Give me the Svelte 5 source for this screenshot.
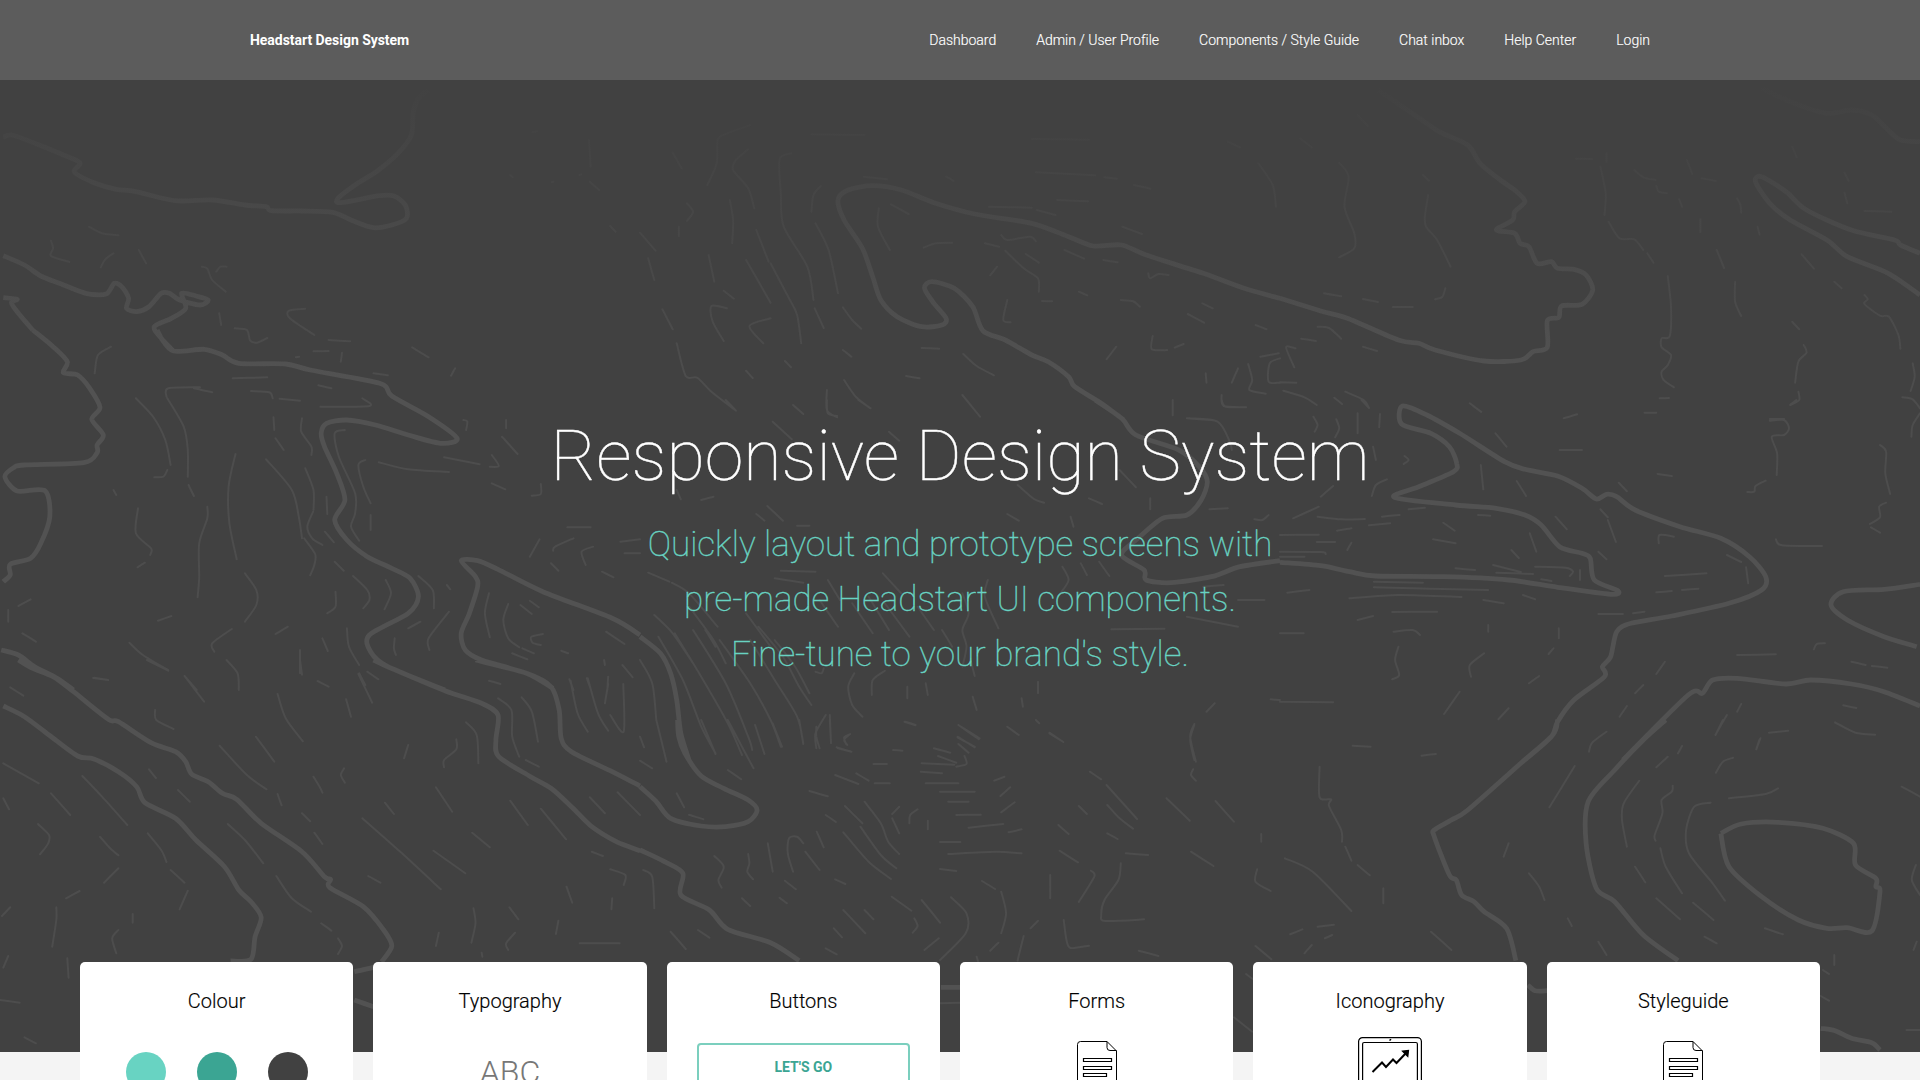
<script>
  const nav = ['Dashboard', 'Admin / User Profile', 'Components / Style Guide', 'Chat inbox', 'Help Center', 'Login'];
  const cards = ['Colour', 'Typography', 'Buttons', 'Forms', 'Iconography', 'Styleguide'];

  // The contour map is split in nine sheets, each with its own 2.45 x 3 grid.
  // Contours are point lists separated by "|"; "major" are the thick index lines.
  const sheets = [
    {
      x: 0, y: 0,
      major: `8,412 30,405 90,432 150,462 196,488 182,516 230,548 285,568 330,574 430,602 520,600 600,615 652,620 665,632 740,633 815,637 860,660 915,683 960,675 996,655 993,615 965,588 930,587 835,608 828,595 870,555 925,512 975,460 1008,405 1012,340 1025,295 1050,270|8,767 60,795 100,828 150,852 210,880 260,882 280,850 300,862 315,895 310,925 335,935 365,920 395,880 415,880 440,900 490,915 510,900 480,888 445,880 455,925 420,955 378,980 395,1015 425,1053|8,893 42,898 28,908 45,940 80,990`,
      minor: `218,680 250,700 290,706|125,722 130,745 125,768 170,786|278,760 258,778 247,802|340,750 358,790|495,800 508,806 520,840 553,875|530,815 540,800 555,800|537,940 542,975|575,985 605,990 613,1022 630,1028 655,1014|748,926 708,932 710,955 770,1005|805,1020 858,1024|1010,1042 1050,1072|1443,420 1447,500|1445,545 1468,570|1495,678 1508,695|1305,396 1316,394|1352,547 1356,545|1250,525 1256,532|1420,525 1424,523|725,1072 733,1070|768,1054 805,1053|838,1058 835,1085`
    },
    {
      x: 640, y: 60,
      major: `1568,715 1480,685 1380,640 1240,585 1180,555 1110,558 1050,530 960,490 820,462 720,428 640,390 570,377 510,390 485,420 500,480 545,565 570,650 590,720 630,770 690,800 740,795 750,775 720,730 697,685 715,665 770,685 815,740 840,812 895,840 960,885 1000,905 1050,950 1065,980 1130,1030 1185,1080`,
      minor: `270,195 210,222 190,240 188,310 165,375|265,268 235,300 228,330 265,385 280,445|370,280 342,298 345,400 352,500 410,620 425,720|443,378 425,405 420,455|220,420 228,480 226,550|430,490 462,570 485,700|285,510 315,605|320,610 365,715 385,765 395,850|260,600 320,728|168,585 182,665|20,595 35,660|0,518 38,572|115,430 130,455 115,483|95,500 95,528|205,692 230,716|213,745 175,738 178,785 205,843|55,748 80,808|90,850 112,948 140,953 175,995 233,1050|320,775 268,798 302,850|428,745 450,804|497,742 520,780 542,806|585,445 583,500 612,570|548,350 605,358|615,433 658,462|695,563 725,550 765,548|458,990 458,1050 483,1072|500,960 530,1012 565,1045|378,1038 400,1062|260,932 276,954|355,903 370,922|497,870 518,890|690,864 733,866|652,948 685,955|792,882 825,918 867,946|790,1005 833,1070|875,620 858,646|900,720 890,780 908,787|985,723 1010,724|895,572 940,625 975,655 977,695|945,582 977,608|845,550 880,560|885,525 900,540 955,530 970,544|1040,570 1088,596|1135,600 1170,607|1245,640 1250,655 1270,642 1295,645|1075,695 1096,706|1178,720 1208,724 1225,740|1378,730 1403,745|1342,762 1382,788|1508,795 1535,808|1182,500 1230,522|855,440 960,443|972,450 1018,465|1022,420 1098,424|970,337 1115,346|1138,352 1168,356|1210,375 1250,386|960,237 1100,239|420,223 550,225|1256,828 1254,868 1292,870|1310,863 1332,852|1167,860 1143,898|1305,1022 1305,1066|1425,1005 1430,1038 1485,1042|1490,912 1500,960 1493,990 1533,1001|1386,940 1388,968|1465,925 1450,968|1568,895 1543,910 1540,965 1568,968|1520,890 1565,880|1340,1075 1400,1080|1515,310 1550,375 1558,440|1440,245 1470,262|750,350 768,362|80,278 102,325`
    },
    {
      x: 1280, y: 60,
      major: `0,715 100,753 165,775 290,840 340,850 380,870 500,903 590,900 620,875 655,862 655,782 683,772 690,738 740,733 766,690 750,645 720,628 680,625 665,605 630,610 610,560 588,550 575,520 530,510 570,480 575,455 600,425 580,395 540,360 490,310 460,255 390,215 330,165 240,90|1180,85 1260,130 1340,160 1400,150 1450,165 1490,210 1520,240 1568,245|1568,580 1520,555 1505,540 1400,510 1290,450 1240,395 1180,350 1165,365 1200,430 1250,480 1340,540 1390,590 1490,640 1568,705`,
      minor: `145,308 168,350 158,440 182,520 182,565 145,592|363,405 355,470 358,500 385,540 418,620|350,345 365,362|785,320 798,400 795,465|805,485 832,535 868,538 890,570|900,580 915,608|950,648 958,740 955,828 935,835 935,862 958,885 950,915 935,935 940,960 965,982|930,1015 953,1014|1115,665 1115,725 1130,768|1070,570 1088,624|1278,583 1308,626|1358,665 1376,685|1432,705 1440,718 1432,732 1470,767 1492,770 1515,825 1520,866|1255,785 1272,808|1283,855 1290,878 1270,905 1262,968|1270,995 1272,1020 1250,1035|1550,910 1555,950 1545,993|1525,1012 1550,1018 1568,1045|1120,415 1128,435 1130,458|1030,478 1030,516|1432,453 1498,455|1383,398 1390,430|1383,338 1393,362|1033,355 1068,363|997,300 1010,342|868,330 890,352 920,360|922,378 928,395 948,400|725,296 765,297|800,280 800,306|1255,260 1266,292|1170,500 1175,524|108,700 150,709|203,717 240,726|276,741 325,741|405,685 398,710 380,718|92,800 120,804 150,836|52,836 88,843|203,860 238,873|38,865 15,862 35,922|0,967 40,968|8,992 60,1012 90,1035|160,995 205,1020 218,1044|133,1013 152,1032|465,1030 493,1056|695,1075 728,1063|893,1058 920,1058|1200,1077 1235,1077|978,418 985,440|50,236 78,262|190,165 215,198`
    },
    {
      x: 0, y: 330,
      major: `80,0 130,50 165,95 155,128 190,135 220,175 245,232 225,268 253,315 238,345 238,368 205,398 60,405 35,412 12,440 42,483 110,482 122,560 100,640 75,685 25,703 25,735 8,755|395,25 425,63 500,58 545,75 585,100 700,102 760,120 930,160 960,198 1050,260 1120,325 1080,340 1000,315 920,285 850,270 800,280 787,310 795,350 825,430 845,510 820,570 850,630 900,680 960,715 1005,745 1025,800 1000,850 905,915 908,965 950,1010 1090,1080|385,0 395,25|3,960 45,975 85,1010 140,1045 180,1080|1568,915 1500,865 1330,785 1220,718 1170,692 1130,692 1165,740 1170,770 1150,850 1130,910 1140,960 1180,990 1290,1030 1355,1075`,
      minor: `272,50 240,75 232,130|333,205 375,260 405,330 418,405|410,420 400,440 378,442|408,200 412,175 490,172|410,205 450,290 460,360 460,440|475,175 520,187|462,465 475,498|570,145 655,142|615,183 660,187 668,205|685,206 735,212|785,230 905,228 888,205|780,166 812,175|915,130 950,136|1115,115 1105,137|670,262 672,300|675,325 695,360|740,265 738,305 763,350 763,375|652,388 715,480 732,560 740,625|577,372 560,470 562,580 580,688|748,415 768,480 768,540|767,545 753,590 765,625 790,645|745,625 772,672 770,705 760,736|508,530 508,565 488,640 488,740 484,802|600,730 628,780 628,825 600,875|338,535 333,610 370,655 368,675|355,698 337,712|278,480 285,495|845,300 820,310 830,380 870,490 870,550 860,590 880,632|895,390 878,405 890,470 908,520|928,397 1000,418 1100,426|1088,382 1175,403|1205,375 1222,408 1200,410|1230,320 1268,372|1240,270 1240,295|1135,270 1145,275 1142,300|1205,460 1238,478|1325,462 1325,492 1303,497|800,500 802,552|908,555 908,600|796,605 818,637|820,695 842,722|865,738 900,780 905,810 890,835|945,750 958,790 942,838|822,785 822,830 802,850|1025,738 1060,780 1063,835|1095,765 1103,778|1100,845 1050,925 1052,960|1030,875 1000,895|967,925 965,955 970,975|850,895 855,950 880,1005|790,925 803,963|735,960 735,1030|705,890 675,912|568,897 520,940 525,965|555,990 582,1030 585,1080|317,938 350,975 412,1020|452,1038 482,1080|75,808 45,828|20,840 20,875|55,910 88,935|420,858 387,872|228,1044 265,1050|1198,790 1188,850 1200,922|1245,822 1233,870 1245,925 1272,952|1275,825 1303,852|1298,812 1320,832|1330,912 1302,920 1305,938 1325,945|1280,955 1308,970|1255,970 1292,988|1322,628 1298,680|1405,625 1360,650 1355,662|1350,700 1368,722|1453,650 1425,665 1435,705|1475,725 1503,742|1390,592 1447,592|1520,635 1568,628|1530,670 1568,670|1485,905 1530,942|1525,1005 1550,1042|1438,1045 1448,1080|1490,1040 1488,1080|1395,1048 1405,1080|1480,990 1482,1005|1375,962 1392,970|778,1053 805,1070|880,1030 895,1065|900,1025 927,1048|1198,1052 1226,1062`
    },
    {
      x: 640, y: 400,
      major: `1115,0 1180,55 1215,105 1320,150 1370,200 1390,245 1375,300 1340,345 1280,355 1220,415 1180,465 1235,510 1240,540 1300,548 1400,530 1470,500 1568,482|0,710 50,760 75,820 90,900 100,1000 120,1080`,
      minor: `210,0 235,32|325,65 372,118|610,95 635,122|1345,55 1415,65 1445,125 1450,150|1175,210 1215,262|1250,295 1250,328|1395,328 1440,325|1100,295 1132,312|900,342 928,362|312,318 350,362|285,342 305,362|385,377 415,377|925,255 965,297 990,308|1055,350 1062,380|1540,345 1525,360 1505,358|20,518 72,545|78,548 120,580 190,680|35,645 80,700 130,790|120,620 180,720 210,790|0,780 30,850 40,960|45,710 105,840 150,980 185,1060|85,700 150,830 215,970 250,1065|130,690 210,850 265,1010 275,1050|195,720 270,850 320,960 345,1040|270,720 330,840 385,950 400,1030|290,680 350,770 390,860 420,915|330,720 380,800 415,880|260,640 320,740|345,512 430,515|330,535 400,548|595,520 640,580|460,540 490,600|440,600 485,680|520,610 570,700|560,590 610,690|600,610 660,710|680,620 720,690|740,690 765,740|852,540 845,590 878,685|790,580 805,640 790,690 800,740 790,800|1035,500 1050,540 1030,580|1080,490 1095,525|1125,485 1150,528|525,820 510,860 520,915 545,950|600,812 570,840 568,885|655,860 655,895|700,850 705,885|815,890 825,930|935,895 938,920|975,845 975,880|650,965 675,975|780,975 830,1018|778,1010 820,1042|900,980 928,1005|970,960 978,970|1003,1000 1037,1026|465,945 468,1030|455,945 430,1000 432,1045|512,1005 500,1020 508,1035|485,1045 518,1055|620,1050 643,1052|1408,910 1388,935|1358,975 1348,1020 1358,1080|1545,898 1568,900|1155,688 1285,686|1465,600 1530,600|1340,650 1465,680|1380,560 1430,555|1425,0 1435,20 1485,22|1305,0 1305,45|375,15 400,42|458,0 460,40 483,48|535,0 565,25|800,0 833,50|90,270 100,298|150,300 180,290|185,740 160,690|430,815 445,820 450,805|810,780 820,828`
    },
    {
      x: 1280, y: 400,
      major: `0,487 100,497 170,515 235,528 400,530 560,540 680,562 810,583 828,572 770,540 760,475 740,460 685,440 640,375 600,345 530,325 430,315 280,292 340,260 425,215 433,190 415,140 370,100 298,72 300,18 360,45 440,100 550,185 600,208 680,228 740,265 775,297 800,283 825,290 870,330 980,380 1080,415 1150,470 1190,530 1180,570 1100,610 960,648 860,670 825,695 810,770 790,800 795,830 720,900 680,965 665,1010 600,1080|1568,553 1480,568 1380,575 1350,615 1390,660 1480,710 1560,740|840,1080 1000,885 1035,880 1060,840 1120,835 1240,852 1300,840 1400,852 1480,875 1568,918`,
      minor: `82,50 92,75 85,95|138,58 145,85 135,112|190,40 190,100|245,42 243,82|200,0 218,24|465,10 493,35|695,55 728,43|893,38 922,38|685,150 740,150|528,100 555,140|492,195 498,268|580,243 603,288|830,248 850,274|925,222 960,228|305,168 315,180 303,192|228,140 235,180|262,238 235,255 225,288|130,258 100,290|95,320 32,355|92,350 150,358 208,357|250,350 293,345|315,328 355,323|218,376 270,370|140,392 175,385|0,405 95,404|90,426 135,426|0,455 100,456 112,462|0,470 60,470|175,428 165,450|400,368 428,392|485,345 515,347|375,418 430,430|675,350 703,388|785,328 803,352|803,360 823,426|612,400 628,455|567,450 585,474|780,455 800,478|430,505 478,510|522,495 590,516|530,518 620,522|625,500 700,503 718,515 710,528|735,510 735,540|640,538 665,543|928,430 930,405 965,410|943,528 1045,520|922,577 960,573|985,570 1025,566|865,640 893,635|780,642 840,642|1095,465 1130,486|1142,502 1147,550|1215,418 1230,436 1328,438|1200,62 1235,60 1247,85 1235,105 1205,110 1218,160 1217,225|1190,242 1165,258 1162,275 1145,276|1265,0 1250,14|1470,135 1485,155 1483,220 1495,282|1485,308 1468,320 1470,352 1445,372|1448,382 1470,398|1568,40 1550,75 1547,110|230,545 350,548|230,562 510,570|170,595 290,585 445,591|498,600 548,610|595,585 625,598|275,636 385,635|190,660 228,648|0,700 58,700|18,578 72,570|278,695 325,690 343,705|290,740 282,780 292,825 275,838|510,675 510,695|500,760 465,795 468,830|440,875 402,942|635,828 610,850|670,745 658,762|560,925 535,958|683,685 683,715|943,785 922,822|890,855 870,880|850,918 832,950|1120,765 1215,763|1335,730 1315,732 1308,748|1400,785 1435,795|1450,798 1488,803|1380,916 1412,924|1360,967 1410,998 1458,1004|1198,998 1245,992|1175,1018 1167,1048|1095,945 1067,1004|1130,912 1120,935|0,905 130,907`
    },
    {
      x: 0, y: 660,
      major: `45,0 80,25 130,50 180,95 265,178 290,185 370,248 430,275 455,305 470,343 510,365 545,400 580,418 640,490 740,575 795,650 810,658 808,683 890,740 940,810 960,858 935,905|868,935 915,922|868,1020 915,1040|8,138 60,170 120,225 190,288 230,297 290,335 335,380 355,428 430,475 480,540 550,620 585,690 615,725 640,772 625,830 615,898 565,903|915,0 950,20 1090,92 1180,130 1220,165 1215,240 1222,290 1300,350 1350,385 1400,440 1450,500 1510,545 1568,572|1165,0 1290,40 1350,80 1370,150 1375,235 1400,275 1500,335 1568,378`,
      minor: `25,82 57,107|8,310 95,370|8,415 22,448|93,492 120,525 118,550 98,583|125,400 172,465|202,348 250,410 312,495|245,530 270,565 290,586|290,625 255,668|195,693 162,715|138,742 138,780 128,860|25,742 5,768|20,888 8,923|165,895 168,953|0,1020 48,1028|60,1132 88,1150|325,762 325,788|290,810 275,835 285,880|362,520 395,570 408,606|418,630 452,668|460,692 440,748|380,150 383,180 425,207|365,328 382,354|436,390 465,425|452,48 500,125|360,0 412,32|555,0 582,40 585,88|538,257 605,345 653,388|627,230 672,305|680,102 700,175 742,244|680,402 690,436|740,460 760,484|770,518 790,552|558,492 600,540 645,610|677,648 715,715 762,755|787,790 812,812|828,835 838,858 828,882|768,350 782,378 790,398|843,325 835,345 845,368|848,118 860,170|878,42 912,128|1000,255 990,295|1118,238 1118,268 1088,300 1088,322|1142,187 1168,225 1172,310|1220,115 1253,150 1255,230 1272,290|1278,112 1303,155 1318,245|1288,300 1320,320|1068,382 1108,455|943,428 965,462|888,475 985,580 1080,688|1062,572 1140,640|1157,518 1200,562|1250,422 1293,495|1325,446 1387,538|1445,412 1482,460|1513,397 1568,465|1450,575 1477,588|1495,628 1532,645 1528,675|1388,680 1402,728|1500,715 1498,748|1368,782 1362,822|1248,742 1270,778|1160,745 1165,790 1155,848|1262,818 1240,850 1245,870|1075,818 1068,858|1180,878 1182,890|1420,850 1518,850|902,648 932,668|1398,62 1415,160 1440,215|1440,55 1465,160 1490,212|1490,72 1482,130|1527,72 1528,215 1495,165|735,0 740,44|230,53 262,59`
    },
    {
      x: 640, y: 720,
      major: `92,0 95,50 110,100 150,168 205,205 265,240 287,270 265,305 210,320 150,318 75,295 40,245 0,200|0,390 60,425 105,460 100,525 170,570 215,628 320,668 390,722|737,802 784,802`,
      minor: `0,50 10,82|40,0 65,125|150,0 185,102|215,0 278,145|282,15 305,102|325,10 348,80|390,0 400,72|432,20 432,50 440,85|465,0 468,68|515,42 500,52 505,72|482,82 515,94|478,165 535,192|530,160 560,182|415,213 460,229|215,150 248,178|90,220 108,262|120,284 155,298|0,122 30,145|8,450 30,470 35,565|182,408 205,440 192,480 200,503|265,402 268,430 263,455 277,478|313,370 325,455|400,370 385,350 365,355 362,400 375,455|405,395 440,450|433,335 450,382|455,285 480,306|498,337 560,425 615,477|502,258 545,310|540,320 590,405 628,445|550,245 590,310 608,365 635,402|635,260 618,282|618,295 635,340|680,268 662,285 660,310|705,302 705,328|355,482 382,508|478,478 503,492|250,535 270,558|342,533 360,550|498,570 552,640|550,570 572,598|475,625 495,652|142,630 170,653|75,635 112,687|455,685 482,703|617,530 665,572|690,540 735,608|672,595 680,618 668,638|762,532 800,580 798,640 735,720|732,655 697,690|838,483 870,507|885,515 897,580 885,640|878,668 858,692|975,602 957,625|940,648 925,722|825,710 828,724|1038,600 1045,660 1055,684 1100,677|1105,452 1113,470 1075,546|1178,430 1172,480 1138,540 1130,585 1140,603 1235,598|1005,465 1005,535|735,447 775,453|755,402 870,395 935,400|735,366 785,366|805,323 890,312|903,337 935,328|775,285 835,284|735,215 820,215|700,190 780,190|755,245 805,245|688,155 740,160|868,182 893,170|907,202 883,228|918,247 885,277|720,85 760,98|730,108 775,128|795,108 800,132 775,140|690,130 770,134|572,132 605,132|620,90 643,92|575,190 612,190|780,15 832,55|778,52 820,80|780,72 805,98|900,20 928,45|1003,38 1037,66|648,5 675,16|1358,12 1348,50 1362,125|1355,148 1350,165 1362,182|1102,155 1130,178|1143,195 1218,297|1145,255 1175,295 1208,326|1075,258 1095,282|1025,315 1050,342|1145,340 1170,357|1028,392 1073,427|1190,400 1245,405|1290,235 1347,302|1410,243 1455,305|1350,395 1405,438|1522,342 1522,365|1512,448 1508,485 1545,513|1508,678 1547,718|1222,692 1270,708|1485,762 1502,778|735,850 784,848|1455,892 1500,935`
    },
    {
      x: 1280, y: 720,
      major: `680,0 668,45 590,130 460,270 420,300 378,330 378,350 415,465 432,480 445,525 475,545 500,575 555,625 578,722|945,0 890,60 820,150 755,245 750,370 775,505 820,545 890,645 975,722|1080,340 1130,312 1220,307 1330,325 1405,370 1410,435 1460,475 1460,500 1470,515 1450,633 1390,623 1340,625 1270,600 1180,530 1100,440 1080,340|607,795 625,812 655,812|1325,925 1360,932 1400,955 1450,968 1470,990`,
      minor: `178,77 222,80|347,107 382,102|97,140 97,232 125,238 120,258 150,330 152,365|160,380 175,422|190,435 220,466|12,415 80,455 175,573|253,505 253,550|25,643 55,628|92,620 132,614|78,675 60,700|110,655 128,645|370,635 420,690|548,410 560,370|610,460 635,500 648,540|705,595 715,618|780,665 800,705|800,35 765,68 757,95|722,138 660,262|880,182 842,250 838,300 850,380|870,440 895,487|922,535 980,598|962,197 960,215 935,240 937,280 918,345 920,362|932,385 945,440 985,520|1012,548 1062,600|1055,248 1015,260 995,330 1002,400 1060,490 1090,542|1100,235 1190,222 1220,205|985,78 975,100|950,110 922,142|1110,113 1085,125 1068,158|1198,38 1245,32|1177,55 1167,88|1360,8 1410,38 1458,44|1085,0 1067,45|1523,200 1568,230|1558,435 1548,480 1568,525|1188,625 1232,643|1040,650 1070,670|1358,705 1358,735|1330,750 1345,762|1325,828 1345,842|1535,930 1568,930|1560,665 1552,690`
    }
  ];

  const num = (n) => n.toFixed(1);

  // Turns one point list into a smooth (Catmull-Rom) path in page pixels.
  function curve(text, sheet) {
    const p = text.trim().split(' ').map((pair) => {
      const [x, y] = pair.split(',').map(Number);
      return [sheet.x + x / 2.45, sheet.y + y / 3];
    });
    let d = `M${num(p[0][0])} ${num(p[0][1])}`;
    for (let i = 0; i < p.length - 1; i++) {
      const a = p[i - 1] ?? p[i];
      const b = p[i];
      const c = p[i + 1];
      const e = p[i + 2] ?? c;
      const k = 7;
      d += `C${num(b[0] + (c[0] - a[0]) / k)} ${num(b[1] + (c[1] - a[1]) / k)} ${num(c[0] - (e[0] - b[0]) / k)} ${num(c[1] - (e[1] - b[1]) / k)} ${num(c[0])} ${num(c[1])}`;
    }
    return d;
  }

  const trace = (kind) => sheets.map((s) => s[kind].split('|').map((t) => curve(t, s)).join('')).join('');
  const major = trace('major');
  const minor = trace('minor');
</script>

{#snippet documentIcon()}
  <svg class="doc" width="42" height="56" viewBox="0 0 42 56">
    <path d="M31 .5H4.500Q1.500 .5 1.500 3.500V52.500Q1.500 55.500 4.500 55.500H37.500Q40.500 55.500 40.500 52.500V10L31 .5V6.500Q31 9.500 34 9.500H40.500" />
    <path class="rows" d="M7.500 17.500H35.500V20.500H7.500ZM7.500 25.500H35.500V28.500H7.500ZM7.500 32.500H30.500V35.500H7.500Z" />
  </svg>
{/snippet}

<div class="page">
  <header>
    <a class="brand" href="#top">Headstart Design System</a>
    <nav>
      {#each nav as item}<a href="#top">{item}</a>{/each}
    </nav>
  </header>

  <main>
    <section class="hero">
      <svg class="map" viewBox="0 0 1920 1052" aria-hidden="true">
        <defs>
          <linearGradient id="fade" x1="0" y1="80" x2="0" y2="380" gradientUnits="userSpaceOnUse">
            <stop offset="0" stop-color="#414141" />
            <stop offset="1" stop-color="#414141" stop-opacity="0" />
          </linearGradient>
        </defs>
        <path class="minor" d={minor} />
        <path class="major" d={major} />
        <rect y="80" width="1920" height="300" fill="url(#fade)" />
      </svg>
      <div class="copy">
        <h1>Responsive Design System</h1>
        <p>Quickly layout and prototype screens with<br />pre-made Headstart UI components.<br />Fine-tune to your brand's style.</p>
      </div>
    </section>

    <section class="cards">
      {#each cards as title}
        <article>
          <h2>{title}</h2>
          {#if title === 'Colour'}
            <div class="swatches"><i class="mint"></i><i class="teal"></i><i class="dark"></i></div>
          {:else if title === 'Typography'}
            <div class="sample">ABC</div>
          {:else if title === 'Buttons'}
            <button>LET'S GO</button>
          {:else if title === 'Iconography'}
            <svg class="tablet" width="64" height="84" viewBox="0 0 64 84">
              <rect x=".6" y=".6" width="62.800" height="82" rx="4" />
              <rect x="4.600" y="5.500" width="54.800" height="70" rx="1.500" />
              <path class="dot" d="M31.500 3.500L33 2.200" />
              <path class="chart" d="M14.500 35L24 25.500L28 30L35 22.500L38.500 26L49 15" />
              <path class="tip" d="M44.500 14.200L50.500 13.500L49.800 19.500Z" />
            </svg>
          {:else}
            {@render documentIcon()}
          {/if}
        </article>
      {/each}
    </section>
  </main>
</div>

<style>
  :global(body) {
    margin: 0;
    overflow: hidden;
  }
  .page {
    height: 1080px;
    overflow: hidden;
    background: #f4f4f4;
    font-family: Roboto, sans-serif;
  }
  header {
    box-sizing: border-box;
    height: 80px;
    padding: 0 270px 0 250px;
    display: flex;
    align-items: center;
    justify-content: space-between;
    background: #5c5c5c;
    font-size: 14px;
  }
  header a {
    color: #fff;
    text-decoration: none;
  }
  .brand {
    font-weight: 700;
    letter-spacing: -0.04px;
  }
  nav {
    display: flex;
    gap: 40px;
  }
  nav a {
    font-weight: 300;
    letter-spacing: -0.01px;
    -webkit-text-stroke: 0.15px #fff;
  }
  .hero {
    display: grid;
    height: 972px;
    background: #414141;
  }
  .map {
    grid-area: 1 / 1;
    width: 1920px;
    height: 1052px;
    margin-top: -80px;
    clip-path: inset(80px 0 0 0);
  }
  .map path {
    fill: none;
    stroke-linejoin: round;
  }
  .major {
    stroke: #525252;
    stroke-width: 4.800;
  }
  .minor {
    stroke: #4d4d4d;
    stroke-width: 2;
    stroke-linecap: round;
  }
  .copy {
    grid-area: 1 / 1;
    z-index: 1;
    padding-top: 334px;
    text-align: center;
  }
  h1 {
    margin: 0;
    font-size: 70px;
    line-height: 84px;
    font-weight: 100;
    color: #fff;
    -webkit-text-stroke: 0.4px #fff;
  }
  p {
    margin: 19px 0 0;
    font-size: 35px;
    line-height: 55px;
    font-weight: 100;
    color: #68d3c2;
    -webkit-text-stroke: 0.4px #68d3c2;
  }
  .cards {
    position: relative;
    display: grid;
    grid-template-columns: repeat(6, 1fr);
    gap: 20px;
    margin: -90px 100px 0 80px;
  }
  article {
    box-sizing: border-box;
    height: 240px;
    padding: 24px 30px;
    display: flex;
    flex-direction: column;
    align-items: center;
    border-radius: 5px;
    background: #fff;
  }
  h2 {
    margin: 0;
    font-size: 20px;
    line-height: 30px;
    font-weight: 300;
    color: #000;
    -webkit-text-stroke: 0.15px #000;
  }
  .swatches {
    display: flex;
    gap: 31px;
    margin-top: 36px;
  }
  .swatches i {
    width: 40px;
    height: 40px;
    border-radius: 50%;
  }
  .mint {
    background: #68d3c2;
  }
  .teal {
    background: #3ba593;
  }
  .dark {
    background: #414141;
  }
  .sample {
    margin-top: 36px;
    font-size: 32px;
    line-height: 40px;
    font-weight: 300;
    color: #777;
  }
  button {
    box-sizing: border-box;
    width: 100%;
    height: 49px;
    margin-top: 27px;
    padding: 0 0 1px;
    border: 2px solid #7bcfbe;
    border-radius: 4px;
    background: none;
    color: #3ba593;
    font: 700 14px Roboto, sans-serif;
  }
  .doc {
    margin-top: 25px;
    fill: none;
    stroke: #000;
  }
  .rows {
    stroke-width: 1.200;
  }
  .tablet {
    margin-top: 21px;
    fill: none;
    stroke: #000;
    stroke-width: 1.200;
  }
  .chart {
    stroke-width: 2;
  }
  .tip {
    fill: #000;
  }
  .dot {
    stroke-width: 1.500;
  }
</style>
